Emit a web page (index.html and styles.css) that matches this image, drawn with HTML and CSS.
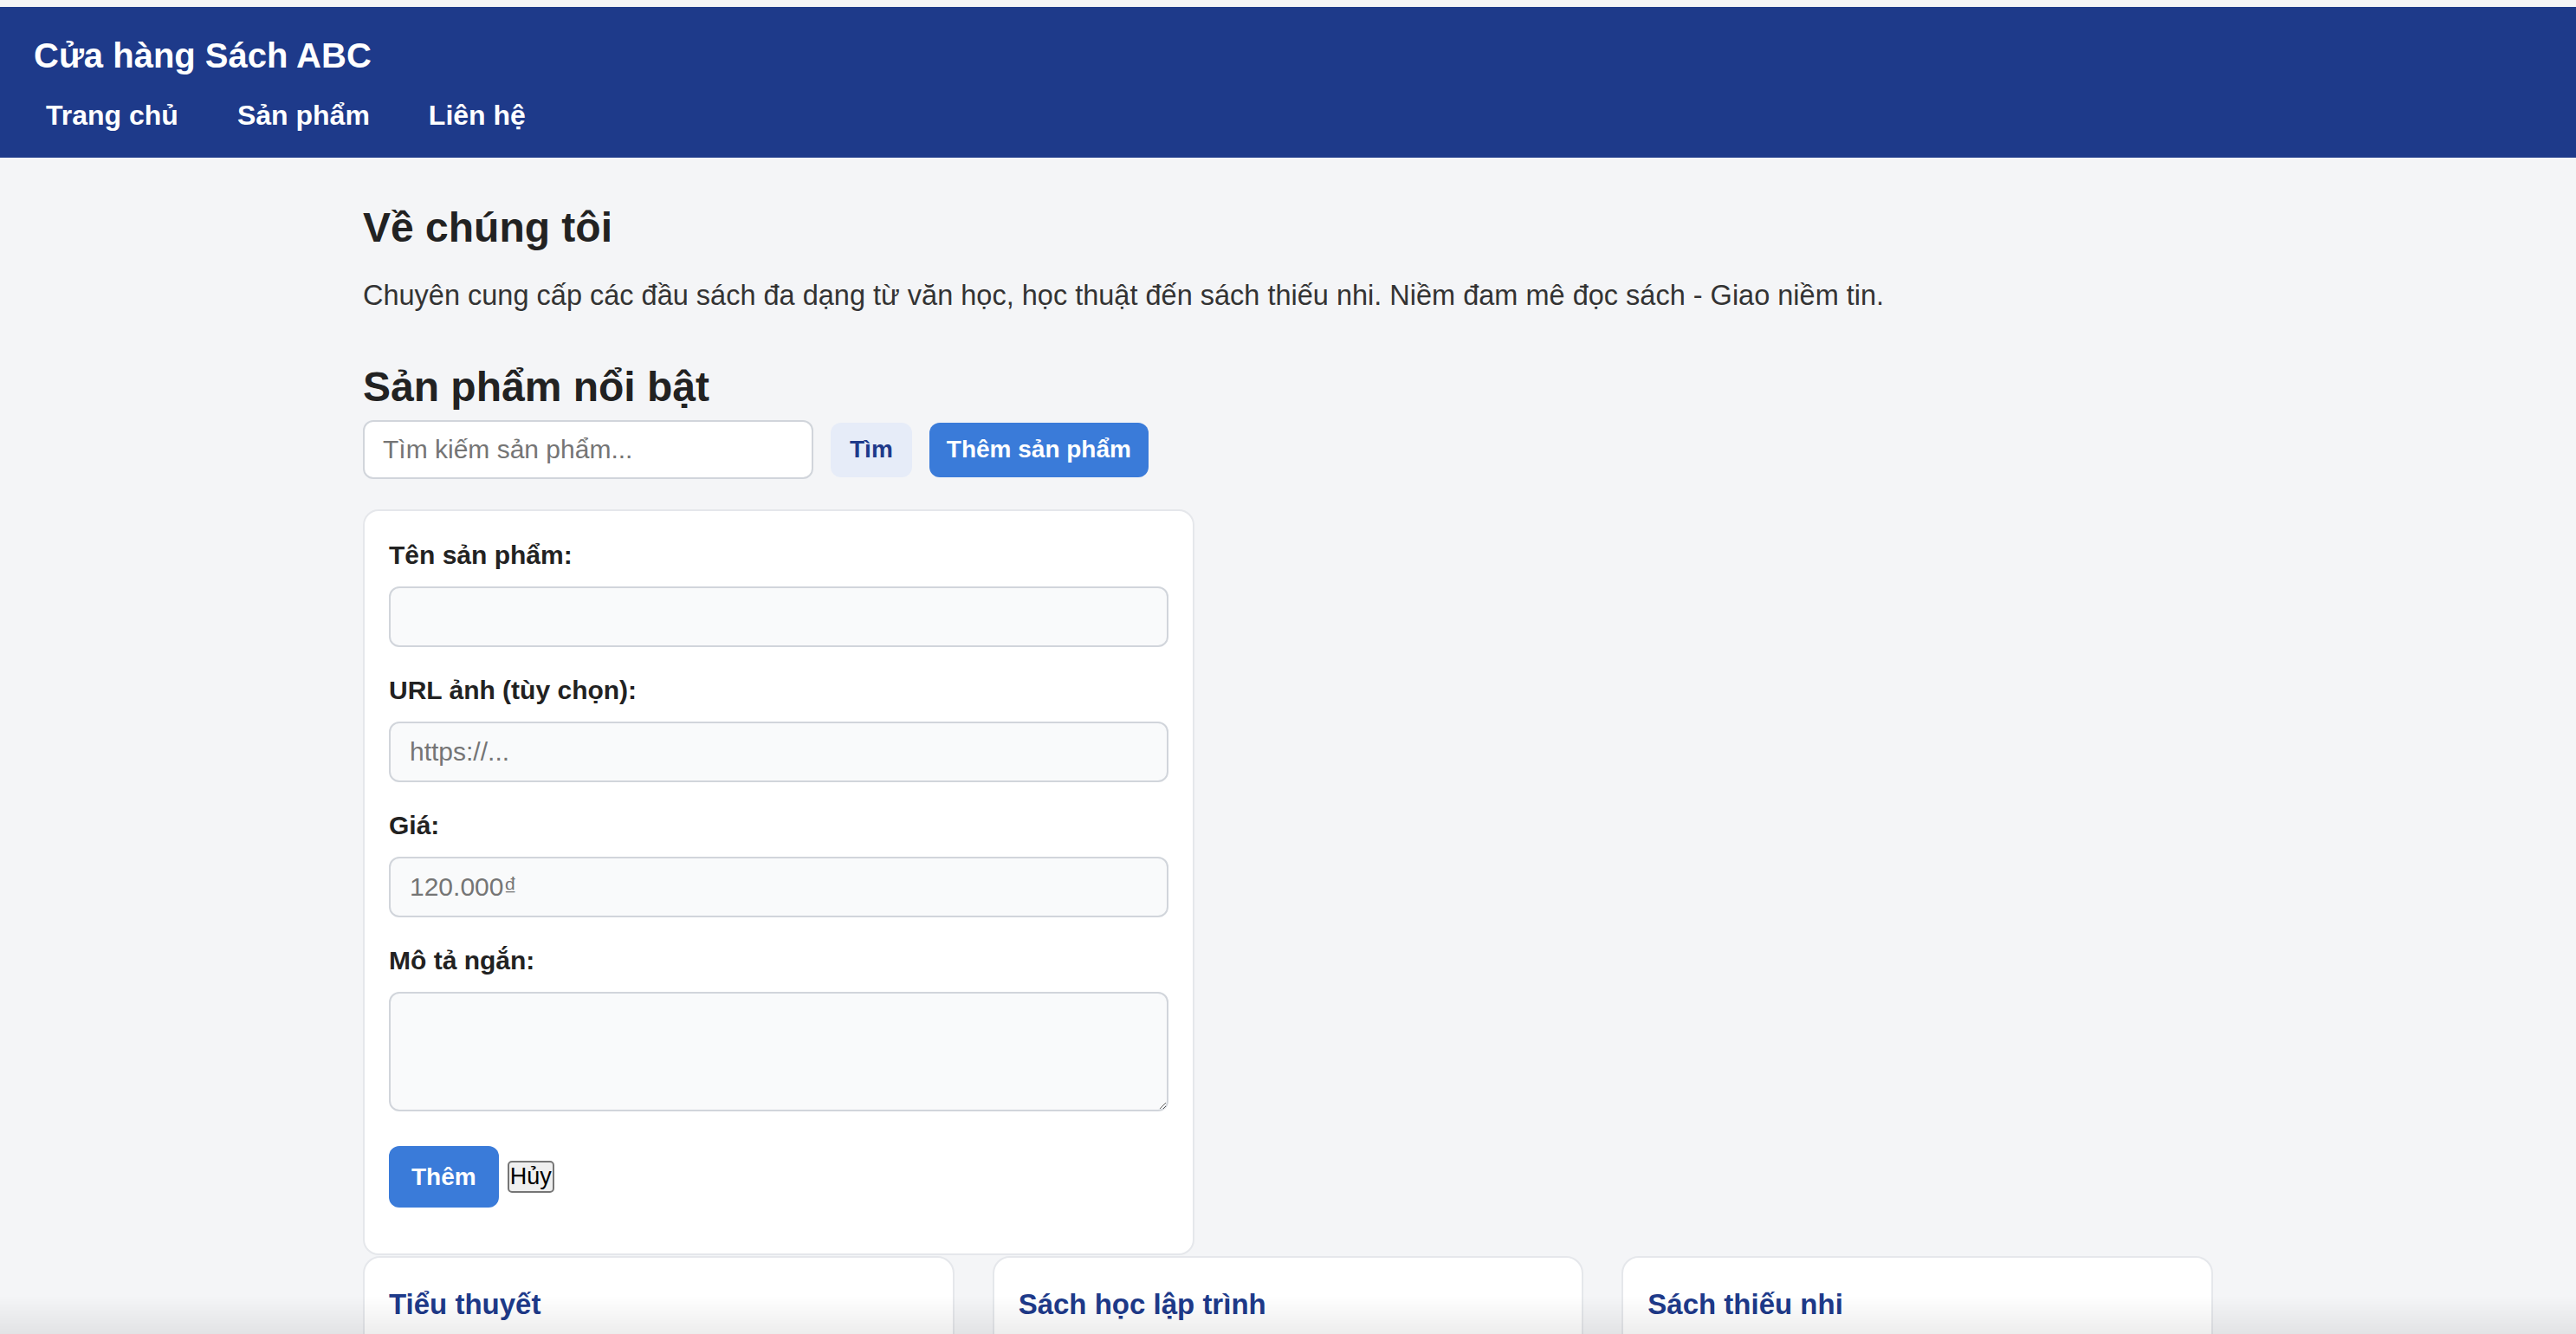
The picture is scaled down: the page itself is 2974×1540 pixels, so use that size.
FILE: index.html
```html
<!DOCTYPE html>
<html lang="vi">
<head>
<meta charset="utf-8">
<title>Cửa hàng Sách ABC</title>
<link rel="stylesheet" href="styles.css">
</head>
<body>
<header class="topbar">
  <div class="brand">Cửa hàng Sách ABC</div>
  <nav class="nav">
    <a class="nav-link" href="#">Trang chủ</a>
    <a class="nav-link" href="#">Sản phẩm</a>
    <a class="nav-link" href="#">Liên hệ</a>
  </nav>
</header>
<main class="container">
  <section class="about">
    <h2 class="section-title">Về chúng tôi</h2>
    <p class="about-text">Chuyên cung cấp các đầu sách đa dạng từ văn học, học thuật đến sách thiếu nhi. Niềm đam mê đọc sách - Giao niềm tin.</p>
  </section>
  <section class="products">
    <h2 class="section-title products-title">Sản phẩm nổi bật</h2>
    <div class="toolbar">
      <input class="search" type="text" placeholder="Tìm kiếm sản phẩm...">
      <button class="btn btn-light">Tìm</button>
      <button class="btn btn-primary btn-add">Thêm sản phẩm</button>
    </div>
    <form class="add-form">
      <label class="field-label">Tên sản phẩm:</label>
      <input class="field" type="text">
      <label class="field-label">URL ảnh (tùy chọn):</label>
      <input class="field" type="text" placeholder="https://...">
      <label class="field-label">Giá:</label>
      <input class="field" type="text" placeholder="120.000₫">
      <label class="field-label">Mô tả ngắn:</label>
      <textarea class="field field-area"></textarea>
      <div class="form-actions">
        <button type="button" class="btn btn-primary btn-submit">Thêm</button>
        <button type="button" class="btn-native">Hủy</button>
      </div>
    </form>
    <div class="grid">
      <div class="card"><h3 class="card-title">Tiểu thuyết</h3></div>
      <div class="card"><h3 class="card-title">Sách học lập trình</h3></div>
      <div class="card"><h3 class="card-title">Sách thiếu nhi</h3></div>
    </div>
  </section>
</main>
<div class="bottom-fade"></div>
</body>
</html>
```

FILE: styles.css
```css
* { box-sizing: border-box; }

html, body {
  margin: 0;
  padding: 0;
  background: #f4f5f7;
  font-family: "Liberation Sans", Arial, sans-serif;
  color: #222;
}

body {
  padding-top: 8px;
  overflow: hidden;
  height: 1540px;
}

.topbar {
  background: #1e3a8a;
  color: #fff;
  padding: 33px 39px 30px;
}

.brand {
  font-size: 40px;
  font-weight: bold;
  line-height: 46px;
}

.nav {
  display: flex;
  gap: 40px;
  margin-top: 28px;
}

.nav-link {
  color: #fff;
  text-decoration: none;
  font-size: 32px;
  font-weight: bold;
  line-height: 37px;
  padding: 0 14px;
}

.container {
  width: 2136px;
  margin: 0 auto;
  padding-top: 53px;
}

.section-title {
  margin: 0;
  font-size: 48px;
  line-height: 55px;
  font-weight: bold;
  color: #222;
}

.about-text {
  margin: 33px 0 0;
  font-size: 32.5px;
  line-height: 37px;
  color: #333;
}

.products-title {
  margin-top: 59px;
}

.toolbar {
  display: flex;
  align-items: center;
  gap: 20px;
  margin-top: 11px;
}

.search {
  width: 520px;
  height: 68px;
  border: 2px solid #d1d5db;
  border-radius: 12px;
  background: #fff;
  padding: 0 21px;
  font-family: "Liberation Sans", Arial, sans-serif;
  font-size: 30px;
  color: #222;
  outline: none;
}

.search::placeholder,
.field::placeholder {
  color: #757575;
}

.btn {
  border: none;
  border-radius: 12px;
  font-family: "Liberation Sans", Arial, sans-serif;
  font-size: 28px;
  font-weight: bold;
  height: 63px;
  padding: 0 22px;
  cursor: pointer;
}

.btn-light {
  background: #e6ecf8;
  color: #1e3a8a;
}

.btn-primary {
  background: #3a7bd9;
  color: #fff;
}

.btn-add {
  padding: 0 20px;
}

.add-form {
  width: 960px;
  margin-top: 35px;
  background: #fff;
  border: 2px solid #e5e7eb;
  border-radius: 18px;
  padding: 34px 28px 53px 28px;
}

.field-label {
  display: block;
  font-size: 30px;
  line-height: 34px;
  font-weight: bold;
  color: #222;
  margin-bottom: 19px;
}

.field {
  display: block;
  width: 100%;
  height: 70px;
  margin: 0 0 33px;
  border: 2px solid #d1d5db;
  border-radius: 12px;
  background: #f9fafb;
  padding: 0 22px;
  font-family: "Liberation Sans", Arial, sans-serif;
  font-size: 30px;
  color: #222;
  outline: none;
}

.field-area {
  height: 138px;
  margin-bottom: 40px;
  padding: 16px 22px;
  resize: vertical;
}

.form-actions {
  display: flex;
  align-items: center;
  gap: 10px;
}

.btn-submit {
  height: 71px;
  padding: 0 26px;
}

.btn-native {
  font-family: "Liberation Sans", Arial, sans-serif;
  font-size: 27px;
  line-height: 31px;
  color: #000;
  background: #efefef;
  border: 2px solid #767676;
  border-radius: 5px;
  padding: 1px 1px;
}

.grid {
  display: grid;
  grid-template-columns: repeat(3, 1fr);
  gap: 44px;
  margin-top: 1px;
}

.card {
  background: #fff;
  border: 2px solid #e5e7eb;
  border-radius: 20px;
  padding: 33px 28px;
  height: 300px;
}

.card-title {
  margin: 0;
  font-size: 33px;
  line-height: 41px;
  font-weight: bold;
  color: #1e3a8a;
}

.bottom-fade {
  position: fixed;
  left: 0;
  right: 0;
  bottom: 0;
  height: 44px;
  background: linear-gradient(to bottom, rgba(0,0,0,0), rgba(0,0,0,0.07));
  pointer-events: none;
}
```
